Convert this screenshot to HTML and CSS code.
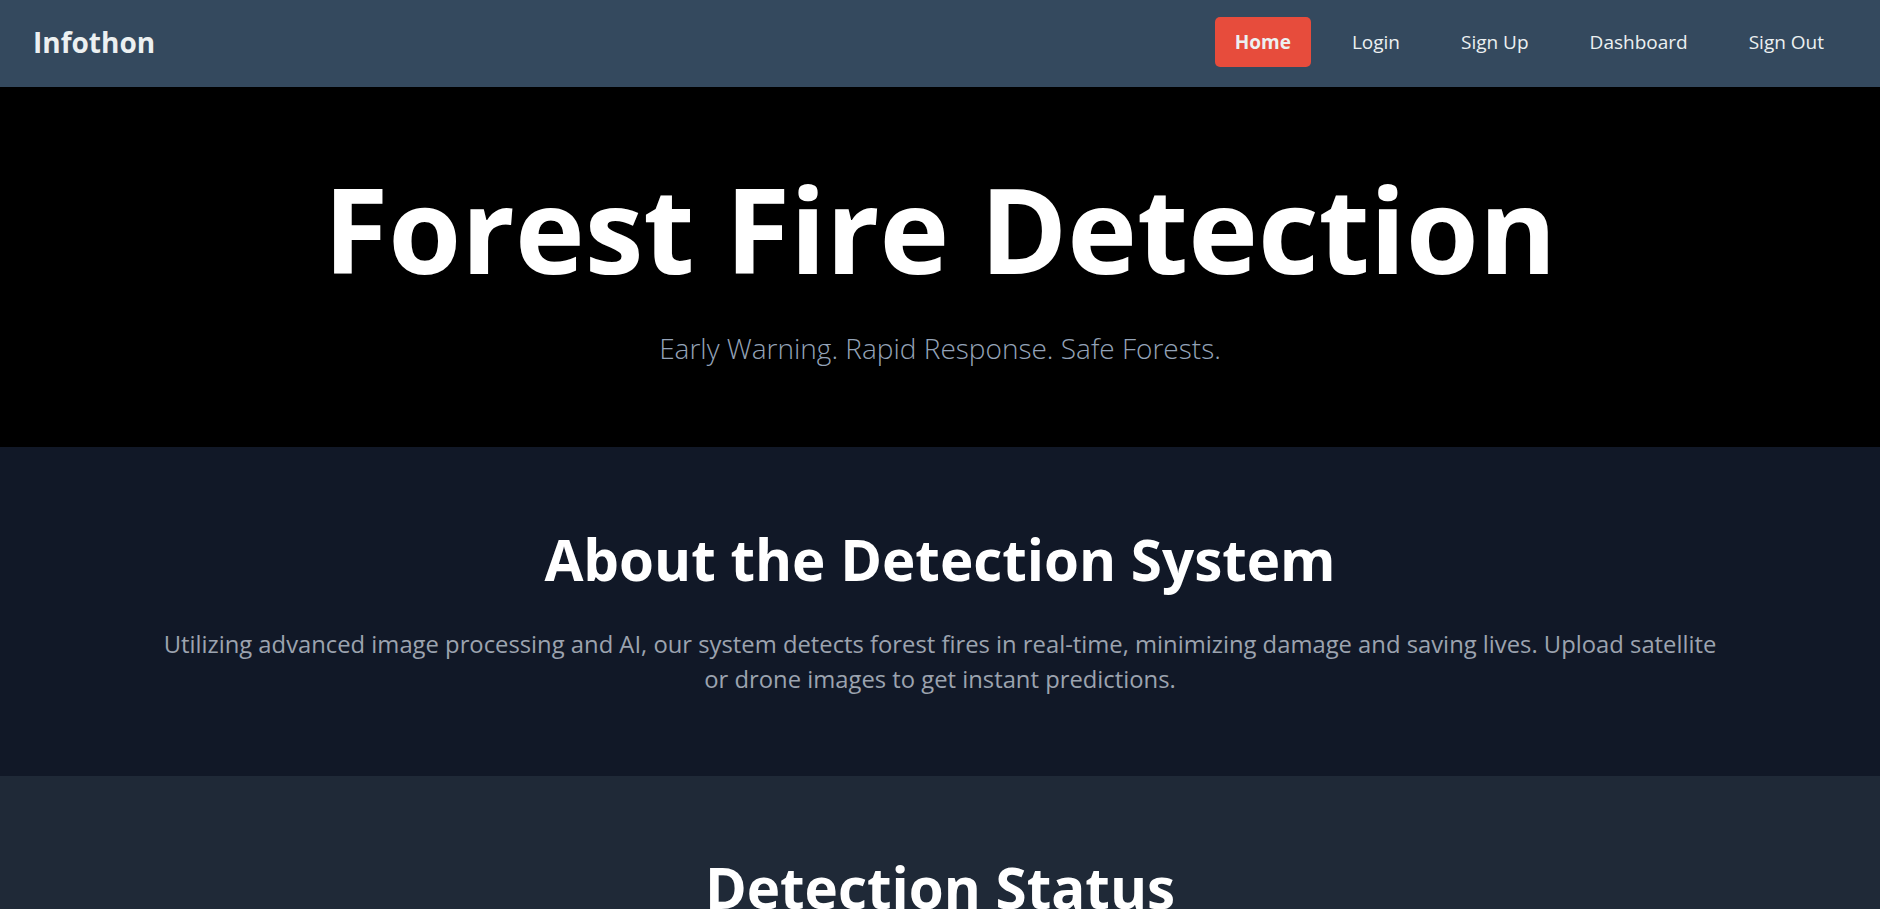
FILE: index.html
```html
<!DOCTYPE html>
<html lang="en">
<head>
<meta charset="utf-8">
<title>Infothon - Forest Fire Detection</title>
<link rel="stylesheet" href="styles.css">
</head>
<body>
<nav class="navbar">
  <a class="logo" href="#">Infothon</a>
  <ul class="nav-links">
    <li><a class="nav-link active" href="#">Home</a></li>
    <li><a class="nav-link" href="#">Login</a></li>
    <li><a class="nav-link" href="#">Sign Up</a></li>
    <li><a class="nav-link" href="#">Dashboard</a></li>
    <li><a class="nav-link" href="#">Sign Out</a></li>
  </ul>
</nav>
<header class="hero">
  <h1 class="hero-title">Forest Fire Detection</h1>
  <p class="hero-subtitle">Early Warning. Rapid Response. Safe Forests.</p>
</header>
<section class="about">
  <h2 class="section-title">About the Detection System</h2>
  <p class="section-text">Utilizing advanced image processing and AI, our system detects forest fires in real-time, minimizing damage and saving lives. Upload satellite or drone images to get instant predictions.</p>
</section>
<section class="status">
  <h2 class="section-title">Detection Status</h2>
</section>
</body>
</html>
```
FILE: styles.css
```css
* { box-sizing: border-box; }
body { margin: 0; background: #1f2937; font-family: "Open Sans", "Noto Sans", sans-serif; color: #fff; }
.navbar { height: 87px; background: #34495e; display: flex; align-items: center; justify-content: space-between; padding: 0 36px 4px 33px; }
.logo { color: #ecf0f1; text-decoration: none; font-weight: 700; font-size: 28px; }
.nav-links { list-style: none; display: flex; gap: 21px; margin: 0; padding: 0; }
.nav-link { display: block; color: #ecf0f1; text-decoration: none; font-size: 19px; padding: 12px 20px; border-radius: 5px; }
.nav-link.active { background: #e74c3c; font-weight: 700; }
.hero { background: #000; text-align: center; padding: 78px 20px 80px; }
.hero-title { margin: 0; font-size: 118px; line-height: 1.09; font-weight: 700; }
.hero-subtitle { margin: 35px 0 0; font-size: 28px; font-weight: 300; color: #94a3b8; }
.about { background: #111827; text-align: center; padding: 79px 20px 79px; }
.status { text-align: center; padding: 78px 20px 80px; }
.section-title { margin: 0; font-size: 56.5px; line-height: 1.19; font-weight: 700; }
.section-text { max-width: 1580px; margin: 34px auto 0; font-size: 23.8px; line-height: 35px; color: #9ca3af; }
```
